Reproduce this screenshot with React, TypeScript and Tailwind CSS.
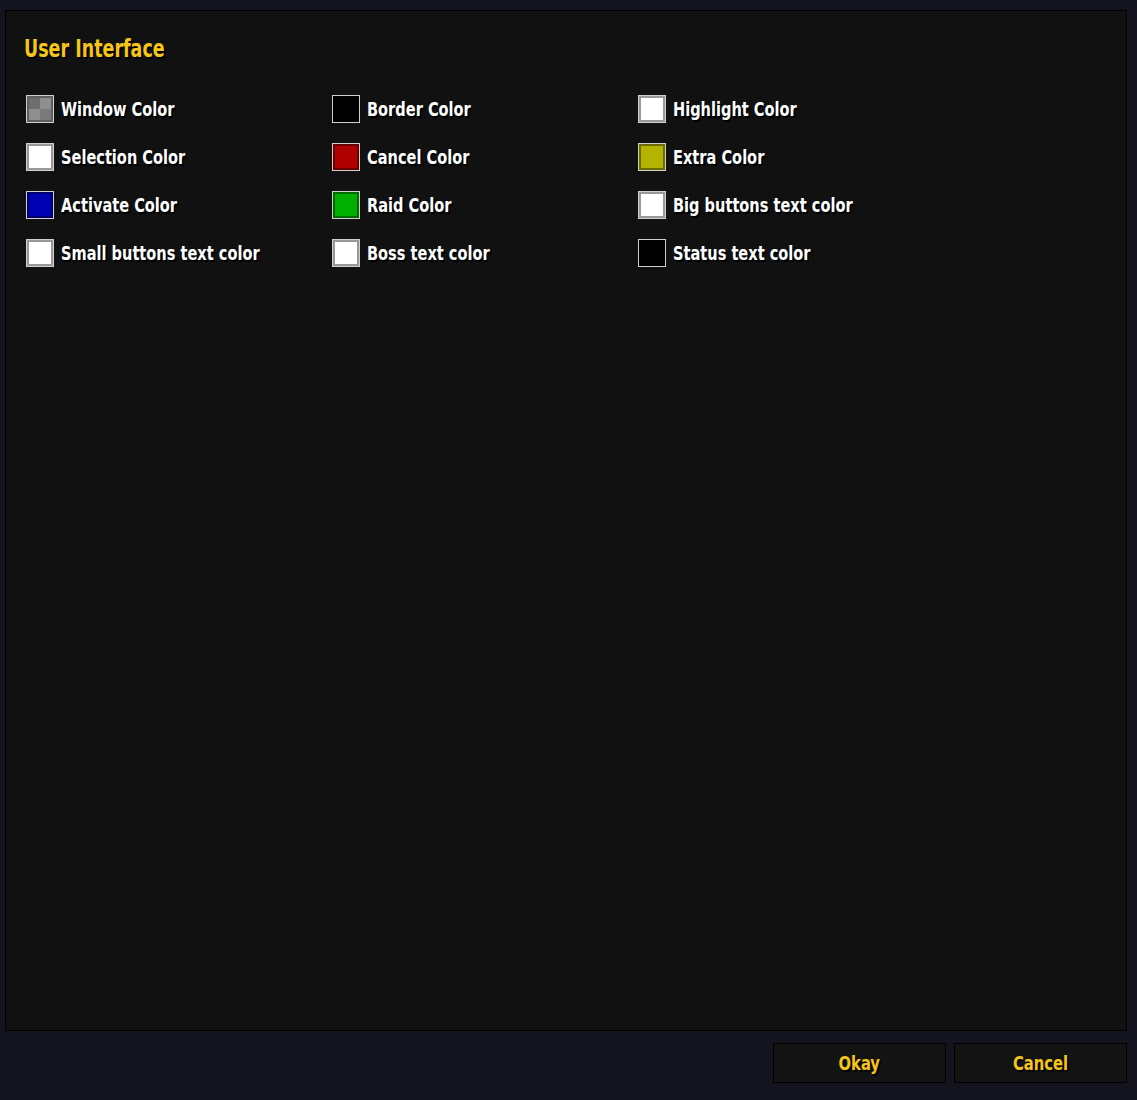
import React from "react";

type Swatch = { label: string; fill: string; checker?: boolean };

const rows: Swatch[][] = [
  [
    { label: "Window Color", fill: "#808080", checker: true },
    { label: "Border Color", fill: "#000000" },
    { label: "Highlight Color", fill: "#ffffff" },
  ],
  [
    { label: "Selection Color", fill: "#ffffff" },
    { label: "Cancel Color", fill: "#b00000" },
    { label: "Extra Color", fill: "#b4b400" },
  ],
  [
    { label: "Activate Color", fill: "#0000b4" },
    { label: "Raid Color", fill: "#00b000" },
    { label: "Big buttons text color", fill: "#ffffff" },
  ],
  [
    { label: "Small buttons text color", fill: "#ffffff" },
    { label: "Boss text color", fill: "#ffffff" },
    { label: "Status text color", fill: "#000000" },
  ],
];

const font = "[font-family:'DejaVu_Sans_Condensed','DejaVu_Sans',sans-serif]";

const ColorBox = ({ fill, checker }: { fill: string; checker?: boolean }) => (
  <div className="w-[28px] h-[28px] border border-[#d0d0d0] shrink-0">
    {checker ? (
      <div className="grid grid-cols-2 grid-rows-2 w-full h-full border-2 border-[#5e5e5e]">
        <div className="bg-[#6e6e6e]" />
        <div className="bg-[#8f8f8f]" />
        <div className="bg-[#8f8f8f]" />
        <div className="bg-[#7a7a7a]" />
      </div>
    ) : (
      <div
        className="w-full h-full border-2 border-black/40"
        style={{ backgroundColor: fill }}
      />
    )}
  </div>
);

const App: React.FC = () => {
  return (
    <div className={`bg-[#14141f] w-full h-[1100px] pt-[10px] pl-[5px] ${font}`}>
      <div className="w-[1122px] h-[1021px] bg-[#111112] border border-black pl-[18px] pt-[22px]">
        <h1 className="text-[#f5c518] font-bold text-[24px] leading-[32px] scale-x-[0.81] origin-left [text-shadow:2px_2px_0_#000]">
          User Interface
        </h1>
        <div className="flex flex-col mt-[20px] pl-[2px]">
          {rows.map((row, i) => (
            <div key={i} className="flex h-[48px] items-center">
              {row.map((s) => (
                <div key={s.label} className="flex items-center gap-[7px] w-[306px]">
                  <ColorBox fill={s.fill} checker={s.checker} />
                  <span className="text-white font-bold text-[20px] leading-none whitespace-nowrap scale-x-[0.81] origin-left [text-shadow:2px_2px_0_#000]">
                    {s.label}
                  </span>
                </div>
              ))}
            </div>
          ))}
        </div>
      </div>
      <div className="flex justify-end gap-[8px] pr-[10px] mt-[12px]">
        {["Okay", "Cancel"].map((b) => (
          <button
            key={b}
            className="w-[173px] h-[40px] bg-[#131314] border border-black text-[#f5c518] font-bold text-[20px]"
          >
            <span className="inline-block scale-x-[0.82] [text-shadow:2px_2px_0_#000]">{b}</span>
          </button>
        ))}
      </div>
    </div>
  );
};

export default App;
